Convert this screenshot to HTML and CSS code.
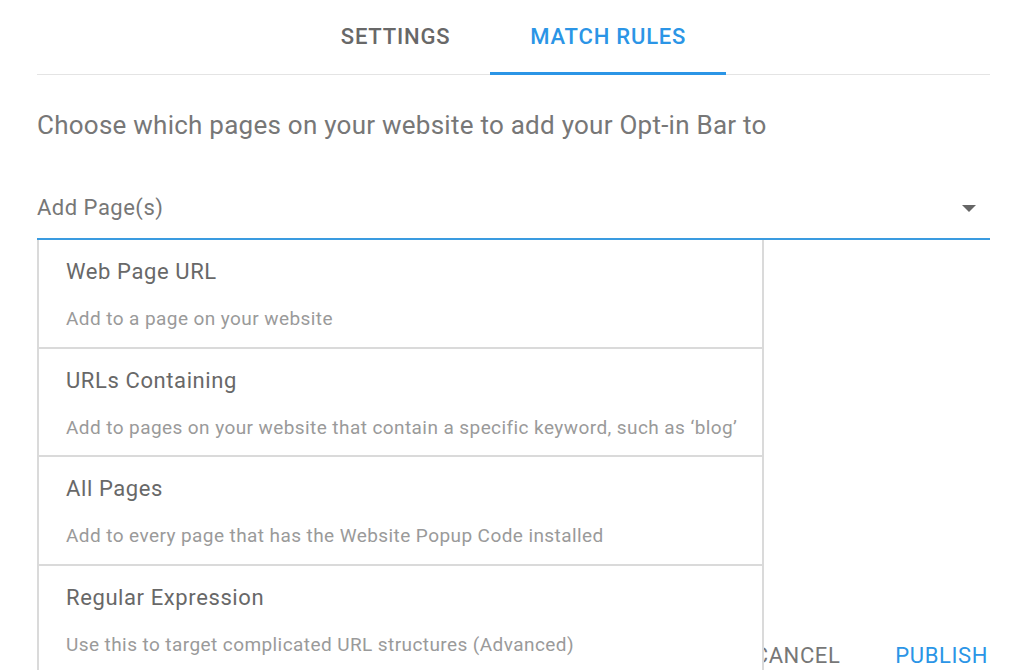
FILE: index.html
```html
<!DOCTYPE html>
<html lang="en">
<head>
    <meta charset="UTF-8">
    <meta name="viewport" content="width=device-width, initial-scale=1.0">
    <title>Match Rules</title>
    <link rel="stylesheet" href="styles.css">
</head>
<body>
    <div class="container">
        <div class="tabs">
            <div class="tab">SETTINGS</div>
            <div class="tab active">MATCH RULES</div>
        </div>

        <p class="intro">Choose which pages on your website to add your Opt-in Bar to</p>

        <div class="select-wrap">
            <div class="select">
                <span>Add Page(s)</span>
                <span class="arrow"></span>
            </div>
            <ul class="menu">
                <li>
                    <div class="item-title">Web Page URL</div>
                    <div class="item-sub">Add to a page on your website</div>
                </li>
                <li>
                    <div class="item-title">URLs Containing</div>
                    <div class="item-sub">Add to pages on your website that contain a specific keyword, such as ‘blog’</div>
                </li>
                <li>
                    <div class="item-title">All Pages</div>
                    <div class="item-sub">Add to every page that has the Website Popup Code installed</div>
                </li>
                <li>
                    <div class="item-title">Regular Expression</div>
                    <div class="item-sub">Use this to target complicated URL structures (Advanced)</div>
                </li>
            </ul>
        </div>

        <div class="actions">
            <button class="btn">CANCEL</button>
            <button class="btn primary">PUBLISH</button>
        </div>
    </div>
</body>
</html>
```

FILE: styles.css
```css
body {
    font-family: Roboto, "Liberation Sans", sans-serif;
    background-color: #fff;
    margin: 0;
    color: #666;
    height: 670px;
    overflow: hidden;
}
.container {
    padding: 0 34px 0 37px;
}
.tabs {
    display: flex;
    justify-content: center;
    border-bottom: 1px solid #e4e4e4;
}
.tab {
    padding: 24px 40px 22px;
    font-size: 22px;
    letter-spacing: 0.8px;
    line-height: 26px;
    font-weight: 500;
    color: #686868;
    border-bottom: 3px solid transparent;
    margin-bottom: -1px;
}
.tab.active {
    color: #2b95e6;
    border-bottom-color: #2b95e6;
}
.intro {
    margin: 35px 0 0;
    font-size: 26px;
    letter-spacing: 0.25px;
    line-height: 30px;
    color: #777;
}
.select-wrap {
    position: relative; /* menu hangs below the field */
    margin-top: 45px;
}
.select {
    display: flex;
    justify-content: space-between;
    align-items: center;
    padding: 8px 14px 15px 0;
    line-height: 30px;
    font-size: 22px;
    letter-spacing: 0.5px;
    color: #777;
    border-bottom: 2px solid #3a9be0;
}
.arrow {
    width: 0;
    height: 0;
    border-left: 7px solid transparent;
    border-right: 7px solid transparent;
    border-top: 7px solid #666;
}
.menu {
    position: absolute;
    top: 55px;
    left: 0;
    width: 723px;
    margin: 0;
    padding: 0;
    list-style: none;
    background: #fff;
    border: 2px solid #dadada;
    border-top: none;
    z-index: 2;
}
.menu li {
    height: 108.5px;
    box-sizing: border-box;
    padding: 18px 27px 0;
    border-bottom: 2px solid #dadada;
}
.item-title {
    font-size: 22px;
    letter-spacing: 0.6px;
    line-height: 28px;
    color: #686868;
}
.item-sub {
    margin-top: 21px;
    font-size: 19px;
    letter-spacing: 0.42px;
    line-height: 24px;
    color: #9a9a9a;
    white-space: nowrap;
}
.actions {
    display: flex;
    justify-content: flex-end;
    gap: 55px;
    padding-right: 2px;
    margin-top: 403px;
}
.btn {
    background: none;
    border: none;
    padding: 0;
    font-family: inherit;
    font-size: 22px;
    letter-spacing: 0.6px;
    line-height: 26px;
    color: #777;
    cursor: pointer;
}
.btn.primary {
    color: #2b95e6;
}
```
